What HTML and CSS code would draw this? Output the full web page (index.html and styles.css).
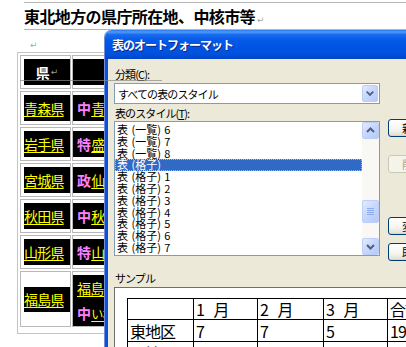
FILE: index.html
```html
<!DOCTYPE html>
<html lang="ja">
<head>
<meta charset="utf-8">
<title>表のオートフォーマット</title>
<link rel="stylesheet" href="styles.css">
</head>
<body>
<div class="page">
  <div class="doc">
    <div class="title">東北地方の県庁所在地、中核市等<span class="pm">↵</span></div>
    <div class="para"><span class="pm">↵</span></div>
    <div class="tbl">
      <div class="gl"></div>
      <div class="cell c1"><div class="blk hd">県<span class="pm pmw">↵</span></div></div>
      <div class="cell c2"><div class="blk"></div></div>

      <div class="cell c1"><div class="blk"><span class="pref">青森県</span></div></div>
      <div class="cell c2"><div class="blk"><span class="kind">中</span><span class="city">青森市</span></div></div>

      <div class="cell c1"><div class="blk"><span class="pref">岩手県</span></div></div>
      <div class="cell c2"><div class="blk"><span class="kind">特</span><span class="city">盛岡市</span></div></div>

      <div class="cell c1"><div class="blk"><span class="pref">宮城県</span></div></div>
      <div class="cell c2"><div class="blk"><span class="kind">政</span><span class="city">仙台市</span></div></div>

      <div class="cell c1"><div class="blk"><span class="pref">秋田県</span></div></div>
      <div class="cell c2"><div class="blk"><span class="kind">中</span><span class="city">秋田市</span></div></div>

      <div class="cell c1"><div class="blk"><span class="pref">山形県</span></div></div>
      <div class="cell c2"><div class="blk"><span class="kind">特</span><span class="city">山形市</span></div></div>

      <div class="cell c1 tall"><div class="blk"><span class="pref">福島県</span></div></div>
      <div class="cell c2 tall"><div class="blk two">
        <div class="ln"><span class="city">福島市</span></div>
        <div class="ln"><span class="kind">中</span><span class="city sm">いわき市</span></div>
      </div></div>
    </div>
  </div>

  <div class="dlg">
    <div class="tb">表のオートフォーマット</div>
    <div class="body">
      <div class="top">
        <div class="lc">
          <div class="lbl">分類(<u>C</u>):</div>
          <div class="combo">
            <span class="ctext">すべての表のスタイル</span>
            <span class="xpbtn ddb"><svg width="15" height="15" viewBox="0 0 15 15"><path d="M4 5.5 L7.5 9 L11 5.5" fill="none" stroke="#4d6185" stroke-width="2"/></svg></span>
          </div>
          <div class="lbl l2">表のスタイル(<u>T</u>):</div>
          <div class="list">
            <div class="items">
              <div class="it">表 (一覧) 6</div>
              <div class="it">表 (一覧) 7</div>
              <div class="it">表 (一覧) 8</div>
              <div class="it sel">表 (格子)</div>
              <div class="it">表 (格子) 1</div>
              <div class="it">表 (格子) 2</div>
              <div class="it">表 (格子) 3</div>
              <div class="it">表 (格子) 4</div>
              <div class="it">表 (格子) 5</div>
              <div class="it">表 (格子) 6</div>
              <div class="it">表 (格子) 7</div>
            </div>
            <div class="sb">
              <div class="xpbtn sbb"><svg width="15" height="15" viewBox="0 0 15 15"><path d="M4 9 L7.5 5.5 L11 9" fill="none" stroke="#4d6185" stroke-width="2"/></svg></div>
              <div class="trk">
                <div class="xpbtn thumb"><svg width="15" height="9" viewBox="0 0 15 9"><path d="M4 1.5 H11 M4 3.5 H11 M4 5.5 H11 M4 7.5 H11" stroke="#8cabf0" stroke-width="1"/></svg></div>
              </div>
              <div class="xpbtn sbb"><svg width="15" height="15" viewBox="0 0 15 15"><path d="M4 6 L7.5 9.5 L11 6" fill="none" stroke="#4d6185" stroke-width="2"/></svg></div>
            </div>
          </div>
        </div>
        <div class="rc">
          <div class="btn">新規作成(N)...</div>
          <div class="btn dis">削除(D)</div>
          <div class="btn b3">変更(M)...</div>
          <div class="btn b4">既定(F)...</div>
        </div>
      </div>
      <div class="lbl l3">サンプル</div>
      <div class="sample">
        <table>
          <colgroup><col class="w66"><col class="w64"><col class="w66"><col class="w64"><col class="w60"></colgroup>
          <tr class="r1"><td></td><td>1 月</td><td>2 月</td><td>3 月</td><td>合計</td></tr>
          <tr class="r2"><td>東地区</td><td>7</td><td>7</td><td>5</td><td>19</td></tr>
          <tr class="r2"><td>西地区</td><td>6</td><td>4</td><td>7</td><td>17</td></tr>
          <tr class="r2"><td>南地区</td><td>8</td><td>7</td><td>9</td><td>24</td></tr>
        </table>
      </div>
    </div>
  </div>
</div>
</body>
</html>
```

FILE: styles.css
```css
html, body {
  margin: 0;
  padding: 0;
  background: #ffffff;
}
.page {
  position: relative;
  width: 406px;
  height: 347px;
  overflow: hidden;
  font-family: "Noto Sans CJK JP", "DejaVu Sans", sans-serif;
  color: #000;
}

/* ---------- document ---------- */
.doc {
  padding: 2px 0 0 24px;
}
.title {
  border-top: 1px solid #b4b4b4;
  border-bottom: 1px solid #b4b4b4;
  height: 26px;
  line-height: 26px;
  font-size: 16px;
  font-weight: bold;
  letter-spacing: -0.6px;
  white-space: nowrap;
}
.pm {
  font-family: "DejaVu Sans", sans-serif;
  font-size: 9px;
  font-weight: normal;
  color: #a8a8a8;
  letter-spacing: 0;
  margin-left: 2px;
}
.pmw { color: #9a9a9a; }
.para {
  height: 22px;
  line-height: 22px;
  padding-left: 4px;
}
.tbl {
  position: relative;
  margin-left: -7px;
  width: max-content;
  display: grid;
  grid-template-columns: 51px 90px;
  column-gap: 1px;
  row-gap: 2px;
  padding: 2px 0 6px 2px;
  border: 1px solid #c4c4c4;
}
.gl {
  position: absolute;
  left: 2px;
  right: 0;
  top: 27px;
  height: 1px;
  background: #8a8a8a;
  opacity: 0.7;
  z-index: 2;
}
.cell {
  box-sizing: border-box;
  height: 34px;
  border: 1px solid #b8b8b8;
  display: flex;
  align-items: center;
}
.cell.tall { height: 56px; }
.c1 { padding-left: 3px; }
.c2 { padding-left: 0; }
.blk {
  flex: 1;
  height: 26px;
  background: #000;
  display: flex;
  align-items: center;
  font-size: 14px;
  letter-spacing: -0.8px;
  white-space: nowrap;
  overflow: hidden;
}
.c2 .blk { padding-left: 4px; }
.blk.hd {
  justify-content: center;
  color: #fff;
  font-weight: bold;
}
.pref, .city {
  color: #ffff00;
  text-decoration: underline;
  text-underline-offset: 2px;
}
.kind {
  color: #ff80ff;
  font-weight: bold;
  margin-right: 1px;
}
.city.sm { font-size: 12px; }
.c2.tall { align-items: stretch; padding-top: 3px; }
.blk.two {
  height: auto;
  flex-direction: column;
  align-items: flex-start;
  justify-content: space-around;
}
.c1.tall .blk { height: 25px; }

/* ---------- dialog ---------- */
.dlg {
  position: absolute;
  left: 105px;
  top: 30px;
  width: 345px;
  height: 340px;
  border-radius: 7px 7px 0 0;
  overflow: hidden;
  font-size: 11px;
  box-shadow: -1px 0 0 #6f8fd8;
}
.tb {
  height: 29px;
  line-height: 29px;
  padding-left: 7px;
  color: #fff;
  font-weight: bold;
  font-size: 12px;
  letter-spacing: -1px;
  text-shadow: 1px 1px 0 #0a2a8a;
  background: linear-gradient(to bottom, #2a7af0 0%, #4b9af8 7%, #1a6af0 16%, #0459e6 35%, #0054e3 60%, #0050dc 85%, #0044c4 100%);
}
.body {
  height: 320px;
  background: #ece9d8;
  border-left: 3px solid #0c4fdd;
  padding: 7px 0 0 6px;
}
.top {
  display: flex;
}
.lc {
  width: 266px;
  flex: none;
}
.lbl {
  height: 16px;
  line-height: 16px;
  padding-left: 1px;
  letter-spacing: -0.9px;
  white-space: nowrap;
}
.lbl u { text-underline-offset: 1px; }
.combo {
  box-sizing: border-box;
  margin-top: 1px;
  height: 21px;
  border: 1px solid #7f9db9;
  background: #fff;
  display: flex;
  align-items: center;
  padding-left: 3px;
}
.ctext {
  letter-spacing: -0.9px;
  white-space: nowrap;
}
.xpbtn {
  box-sizing: border-box;
  border: 1px solid #bccdf8;
  border-radius: 2px;
  background: linear-gradient(135deg, #e3ecfe 0%, #c8d8fc 45%, #b6caf6 100%);
  display: flex;
  align-items: center;
  justify-content: center;
}
.ddb {
  margin-left: auto;
  margin-right: 1px;
  width: 16px;
  height: 17px;
}
.l2 { margin-top: 1px; }
.list {
  box-sizing: border-box;
  height: 135px;
  border: 1px solid #7f9db9;
  background: #fff;
  display: flex;
}
.items {
  flex: 1;
  padding-top: 2px;
}
.it {
  height: 11.8px;
  line-height: 11.8px;
  font-size: 11px;
  padding-left: 2px;
  white-space: nowrap;
  word-spacing: 1px;
}
.it.sel {
  background: #316ac5;
  color: #fff;
  outline: 1px dotted #9fbcf0;
  outline-offset: -1px;
}
.sb {
  width: 17px;
  flex: none;
  display: flex;
  flex-direction: column;
  background: #f9f8f4;
}
.sbb {
  width: 17px;
  height: 17px;
  flex: none;
}
.trk {
  flex: 1;
  padding-top: 61px;
}
.thumb {
  width: 17px;
  height: 23px;
}
.rc {
  margin-left: 8px;
  padding-top: 53px;
  display: flex;
  flex-direction: column;
}
.btn {
  box-sizing: border-box;
  width: 90px;
  height: 18px;
  line-height: 16px;
  padding-left: 13px;
  border: 1px solid #003c74;
  border-radius: 3px;
  background: linear-gradient(to bottom, #ffffff 0%, #f5f4ef 60%, #e6e3d8 90%, #d6d0c5 100%);
  white-space: nowrap;
  letter-spacing: -0.9px;
}
.btn.dis {
  margin-top: 18px;
  border-color: #c9c7ba;
  background: #f5f4ea;
  color: #aca899;
}
.btn.b3 { margin-top: 44px; }
.btn.b4 { margin-top: 8px; }
.l3 { margin-top: 9px; }
.sample {
  margin-top: 1px;
  height: 80px;
  border: 1px solid #6f6f6f;
  background: #fff;
  padding: 10px 0 0 12px;
}
.sample table {
  border-collapse: collapse;
  table-layout: fixed;
  font-size: 16px;
  letter-spacing: -1px;
  word-spacing: 7px;
}
.w66 { width: 66px; }
.w64 { width: 64px; }
.w60 { width: 60px; }
.sample td {
  border: 1px solid #000;
  padding: 0 0 0 2px;
  line-height: 1;
  vertical-align: middle;
  white-space: nowrap;
}
.r1 { height: 21px; }
.r2 { height: 22px; }
```
